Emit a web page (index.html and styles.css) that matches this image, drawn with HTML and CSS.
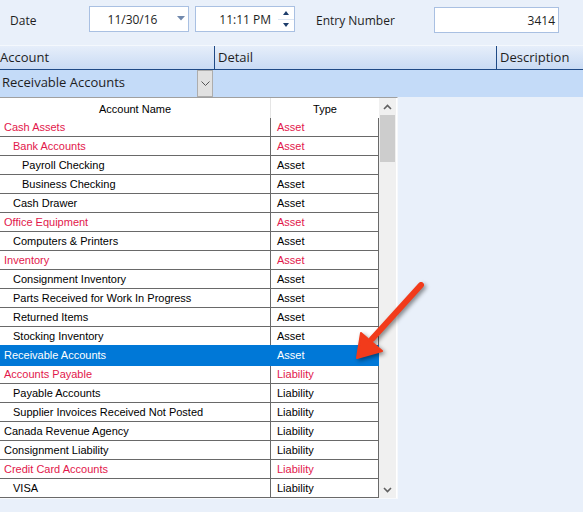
FILE: index.html
```html
<!DOCTYPE html>
<html lang="en">
<head>
    <meta charset="UTF-8">
    <title>Journal Entry</title>
    <link rel="stylesheet" href="styles.css">
</head>
<body>
    <div class="toolbar">
        <span class="label label-date">Date</span>
        <div class="field date-field">
            <span class="field-text">11/30/16</span>
            <span class="drop-btn"><svg width="8" height="5" viewBox="0 0 8 5"><path d="M0 0h8L4 4.5z" fill="#7189ad"/></svg></span>
        </div>
        <div class="field time-field">
            <span class="field-text">11:11 PM</span>
            <span class="spin">
                <span class="spin-up"><svg width="6" height="4" viewBox="0 0 6 4"><path d="M0 4h6L3 0z" fill="#1d3d6b"/></svg></span>
                <span class="spin-down"><svg width="6" height="4" viewBox="0 0 6 4"><path d="M0 0h6L3 4z" fill="#1d3d6b"/></svg></span>
            </span>
        </div>
        <span class="label label-entry">Entry Number</span>
        <div class="field entry-field">3414</div>
    </div>

    <div class="grid-header">
        <div class="col col-account">Account</div>
        <div class="col col-detail">Detail</div>
        <div class="col col-desc">Description</div>
    </div>

    <div class="combo-row">
        <div class="combo">
            <span class="combo-text">Receivable Accounts</span>
            <span class="combo-btn"><svg width="9" height="5" viewBox="0 0 9 5"><path d="M0.5 0.5l4 4 4-4" fill="none" stroke="#555" stroke-width="1"/></svg></span>
        </div>
    </div>

    <div class="dropdown">
        <div class="list">
            <div class="list-head">
                <div class="cell name">Account Name</div>
                <div class="cell type">Type</div>
            </div>
            <div id="rows"></div>
        </div>
        <div class="scrollbar">
            <span class="sb-arrow"><svg width="9" height="6" viewBox="0 0 9 6"><path d="M1 5l3.5-3.5L8 5" fill="none" stroke="#606060" stroke-width="1.6"/></svg></span>
            <div class="sb-thumb"></div>
            <span class="sb-arrow sb-bottom"><svg width="9" height="6" viewBox="0 0 9 6"><path d="M1 1l3.5 3.5L8 1" fill="none" stroke="#606060" stroke-width="1.6"/></svg></span>
        </div>
    </div>

    <svg class="pointer" width="100" height="110" viewBox="340 270 100 110">
        <line x1="421" y1="285" x2="372" y2="339" stroke="#f23b1b" stroke-width="6" stroke-linecap="round"/>
        <polygon points="357,358 361,333 382,351" fill="#f23b1b" stroke="#f23b1b" stroke-width="2" stroke-linejoin="round"/>
    </svg>

    <script>
        const accounts = [
            ['Cash Assets', 0, 'Asset', true],
            ['Bank Accounts', 1, 'Asset', true],
            ['Payroll Checking', 2, 'Asset'],
            ['Business Checking', 2, 'Asset'],
            ['Cash Drawer', 1, 'Asset'],
            ['Office Equipment', 0, 'Asset', true],
            ['Computers & Printers', 1, 'Asset'],
            ['Inventory', 0, 'Asset', true],
            ['Consignment Inventory', 1, 'Asset'],
            ['Parts Received for Work In Progress', 1, 'Asset'],
            ['Returned Items', 1, 'Asset'],
            ['Stocking Inventory', 1, 'Asset'],
            ['Receivable Accounts', 0, 'Asset', false, true],
            ['Accounts Payable', 0, 'Liability', true],
            ['Payable Accounts', 1, 'Liability'],
            ['Supplier Invoices Received Not Posted', 1, 'Liability'],
            ['Canada Revenue Agency', 0, 'Liability'],
            ['Consignment Liability', 0, 'Liability'],
            ['Credit Card Accounts', 0, 'Liability', true],
            ['VISA', 1, 'Liability']
        ];

        const rowsEl = document.getElementById('rows');
        accounts.forEach(([name, level, type, group, selected]) => {
            const row = document.createElement('div');
            row.className = 'row' + (group ? ' group' : '') + (selected ? ' selected' : '');
            const nameCell = document.createElement('div');
            nameCell.className = 'cell name';
            nameCell.style.paddingLeft = (4 + level * 9) + 'px';
            nameCell.textContent = name;
            const typeCell = document.createElement('div');
            typeCell.className = 'cell type';
            typeCell.textContent = type;
            row.append(nameCell, typeCell);
            rowsEl.appendChild(row);
        });
    </script>
</body>
</html>
```

FILE: styles.css
```css
body {
    margin: 0;
    width: 583px;
    height: 512px;
    overflow: hidden;
    position: relative;
    background-color: #e9f0fa;
    font-family: "Open Sans", "Noto Sans", sans-serif;
    font-size: 12px;
    color: #1e1e1e;
}

/* top bar */
.toolbar {
    height: 45px;
    display: flex;
    align-items: center;
    position: relative;
}

.label-date {
    margin-left: 10px;
    width: 79px;
    margin-top: -4px;
}

.label-entry {
    margin-left: 21px;
    width: 118px;
    margin-top: -4px;
}

.field {
    box-sizing: border-box;
    height: 26px;
    border: 1px solid #a9c0e2;
    background-color: white;
    display: flex;
    align-items: center;
    margin-top: -7px;
}

.date-field {
    width: 100px;
}

.date-field .field-text {
    flex: 1;
    text-align: center;
    padding-left: 2px;
}

.drop-btn {
    width: 15px;
    height: 100%;
    display: flex;
    align-items: center;
    justify-content: center;
    padding-bottom: 2px;
    box-sizing: border-box;
}

.time-field {
    width: 100px;
    margin-left: 6px;
}

.time-field .field-text {
    flex: 1;
    text-align: right;
    padding-right: 7px;
}

.spin {
    width: 16px;
    height: 100%;
    display: flex;
    flex-direction: column;
}

.spin-up,
.spin-down {
    flex: 1;
    display: flex;
    align-items: center;
    justify-content: center;
}

.spin-up {
    border-bottom: 1px solid #dde6f3;
}

.entry-field {
    width: 125px;
    justify-content: flex-end;
    padding-right: 3px;
    margin-top: -5px;
}

/* grid header */
.grid-header {
    height: 25px;
    box-sizing: border-box;
    display: flex;
    border-top: 1px solid #f4f8fd;
    border-bottom: 1px solid #1f4a86;
    background: linear-gradient(#e6eefa, #c9dbf4);
    font-size: 13px;
}

.col {
    display: flex;
    align-items: center;
    padding-bottom: 2px;
}

.col-account {
    width: 214px;
}

.col-detail {
    width: 278px;
    border-left: 1px solid #1f4a86;
    padding-left: 3px;
}

.col-desc {
    flex: 1;
    border-left: 1px solid #1f4a86;
    padding-left: 3px;
}

.combo-row {
    height: 27px;
    background-color: #c4dbf8;
}

.combo {
    width: 214px;
    height: 100%;
    display: flex;
    align-items: center;
    font-size: 13px;
}

.combo-text {
    flex: 1;
    padding-left: 2px;
    padding-bottom: 4px;
}

.combo-btn {
    box-sizing: border-box;
    width: 16px;
    height: 27px;
    background-color: #e1e1e1;
    border: 1px solid #adadad;
    display: flex;
    align-items: center;
    justify-content: center;
    margin-right: 1px;
}

/* dropdown list */
.dropdown {
    position: absolute;
    left: 0;
    top: 97px;
    width: 397px;
    display: flex;
    border-top: 1px solid #a0a0a0;
    border-right: 1px solid #f7f9fc;
    border-bottom: 1px solid #f7f9fc;
    background-color: white;
    font-family: "Liberation Sans", Arial, sans-serif;
    font-size: 11px;
    color: #000;
}

.list {
    width: 379px;
}

.list-head {
    height: 20px;
    display: flex;
}

.list-head .cell {
    justify-content: center;
    padding-top: 1px;
}

.list-head .name {
    border-right: 1px solid #e5e5e5;
}

.row {
    height: 18px;
    display: flex;
    border-bottom: 1px solid #696969;
}

.cell {
    display: flex;
    align-items: center;
    box-sizing: border-box;
    white-space: nowrap;
    overflow: hidden;
}

.name {
    width: 271px;
}

.row .name {
    border-right: 1px solid #696969;
}

.type {
    width: 108px;
    padding-left: 6px;
    border-right: 1px solid #696969;
}

.list-head .type {
    padding-left: 0;
    border-right: none;
}

.row.group {
    color: #e2174b;
}

.row.selected {
    background-color: #0078d7;
    color: white;
    height: 20px;
    margin-top: -1px;
    border-bottom-color: #0078d7;
    margin-bottom: -1px;
    position: relative;
}

.row.selected .cell {
    border-right-color: #0078d7;
}

.scrollbar {
    width: 17px;
    background-color: #f0f0f0;
    display: flex;
    flex-direction: column;
    align-items: center;
}

.sb-arrow {
    height: 17px;
    display: flex;
    align-items: center;
}

.sb-thumb {
    width: 15px;
    height: 47px;
    background-color: #cdcdcd;
}

.sb-bottom {
    margin-top: auto;
}

/* red pointer arrow */
.pointer {
    position: absolute;
    left: 340px;
    top: 270px;
    filter: drop-shadow(2px 2px 2px rgba(0, 0, 0, 0.45));
}
```
